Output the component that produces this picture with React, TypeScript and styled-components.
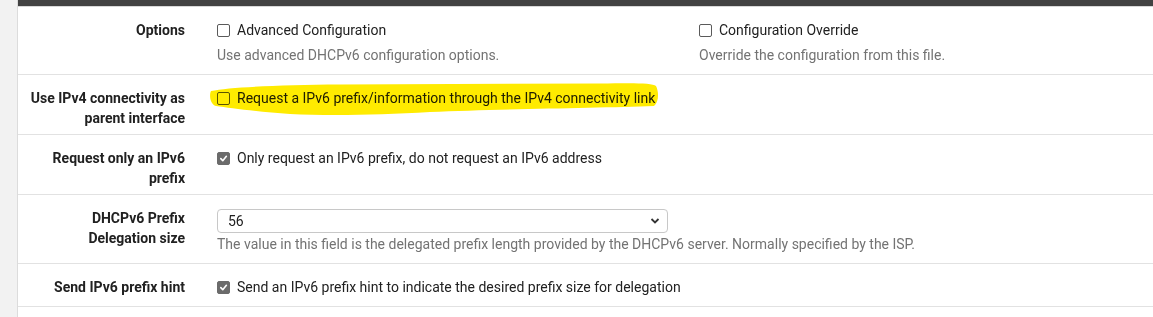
import React from "react"
import styled, { createGlobalStyle } from "styled-components"

const GlobalStyles = createGlobalStyle`
  html, body {
    margin: 0;
    padding: 0;
    background: #f2f2f2;
    font-family: Roboto, "Liberation Sans", Arial, sans-serif;
    font-size: 14px;
    color: #212121;
  }
`

const Page = styled.div`
  position: relative;
  width: 1153px;
  height: 317px;
  overflow: hidden;
  padding-left: 17px;
  box-sizing: border-box;
`

const Panel = styled.section`
  background: #fff;
  border-left: 1px solid #dcdcdc;
  height: 100%;
`

const Heading = styled.div`
  height: 6px;
  background: #424242;
  border-bottom: 1px solid #d8d8d8;
`

const Row = styled.div`
  display: grid;
  grid-template-columns: 167px 1fr;
  column-gap: 32px;
  padding: 13px 0 6px;
  border-bottom: 1px solid #e2e2e2;
`

const Label = styled.div`
  text-align: right;
  font-weight: 700;
  line-height: 20px;
  color: #212121;
`

const Controls = styled.div<{ $cols?: number }>`
  display: grid;
  grid-template-columns: ${(p) => (p.$cols === 2 ? "482px 1fr" : "1fr")};
  padding-bottom: 3px;
`

const Field = styled.div`
  display: flex;
  flex-direction: column;
`

const CheckLine = styled.label`
  display: flex;
  align-items: center;
  gap: 7px;
  line-height: 20px;
  height: 20px;
`

const Box = styled.span<{ $checked?: boolean }>`
  width: 13px;
  height: 13px;
  box-sizing: border-box;
  border-radius: 2px;
  border: 1px solid ${(p) => (p.$checked ? "#6b6b6b" : "#5a5a5a")};
  background: ${(p) => (p.$checked ? "#6b6b6b" : "#fff")};
  display: flex;
  align-items: center;
  justify-content: center;
  flex: none;
`

const Help = styled.div`
  color: #737373;
  line-height: 20px;
  margin-top: 5px;
`

const SelectBox = styled.div`
  width: 451px;
  height: 24px;
  box-sizing: border-box;
  margin-top: 1px;
  border: 1px solid #c8c8c8;
  border-radius: 4px;
  display: flex;
  align-items: center;
  justify-content: space-between;
  padding: 0 7px 0 10px;
  color: #212121;
`

const Help2 = styled(Help)`
  margin-top: 1px;
`

const Highlight = styled.svg`
  position: absolute;
  left: 0;
  top: 0;
  pointer-events: none;
  mix-blend-mode: multiply;
`

function Check({ checked, children }: { checked?: boolean; children: React.ReactNode }) {
  return (
    <CheckLine>
      <Box $checked={checked}>
        {checked && (
          <svg width="9" height="9" viewBox="0 0 10 10">
            <path d="M2 5.2 L4.2 7.4 L8.2 2.6" fill="none" stroke="#fff" strokeWidth="1.8" strokeLinecap="round" strokeLinejoin="round" />
          </svg>
        )}
      </Box>
      {children}
    </CheckLine>
  )
}

function App() {
  return (
    <>
      <GlobalStyles />
      <Page>
        <Panel>
          <Heading />
          <Row>
            <Label>Options</Label>
            <Controls $cols={2}>
              <Field>
                <Check>Advanced Configuration</Check>
                <Help>Use advanced DHCPv6 configuration options.</Help>
              </Field>
              <Field>
                <Check>Configuration Override</Check>
                <Help>Override the configuration from this file.</Help>
              </Field>
            </Controls>
          </Row>
          <Row>
            <Label>
              Use IPv4 connectivity as
              <br />
              parent interface
            </Label>
            <Controls>
              <Check>Request a IPv6 prefix/information through the IPv4 connectivity link</Check>
            </Controls>
          </Row>
          <Row>
            <Label>
              Request only an IPv6
              <br />
              prefix
            </Label>
            <Controls>
              <Check checked>Only request an IPv6 prefix, do not request an IPv6 address</Check>
            </Controls>
          </Row>
          <Row>
            <Label>
              DHCPv6 Prefix
              <br />
              Delegation size
            </Label>
            <Controls>
              <Field>
                <SelectBox>
                  <span>56</span>
                  <svg width="10" height="8" viewBox="0 0 10 8">
                    <path d="M1.5 2 L5 5.5 L8.5 2" fill="none" stroke="#333" strokeWidth="1.8" />
                  </svg>
                </SelectBox>
                <Help2>
                  The value in this field is the delegated prefix length provided by the DHCPv6 server. Normally specified by the ISP.
                </Help2>
              </Field>
            </Controls>
          </Row>
          <Row>
            <Label>Send IPv6 prefix hint</Label>
            <Controls>
              <Check checked>Send an IPv6 prefix hint to indicate the desired prefix size for delegation</Check>
            </Controls>
          </Row>
        </Panel>
        <Highlight width="1153" height="317" viewBox="0 0 1153 317">
          <path
            d="M211 91 C 230 87 280 85 340 84.5 L 600 83.5 C 630 83 652 82.5 656 86 C 659 92 659 102 654 106 C 600 108 500 109 430 112 C 380 115 330 116 290 114 C 260 112 230 108 216 106 C 210 104 209 95 211 91 Z"
            fill="#ffeb00"
          />
        </Highlight>
      </Page>
    </>
  )
}

export default App
